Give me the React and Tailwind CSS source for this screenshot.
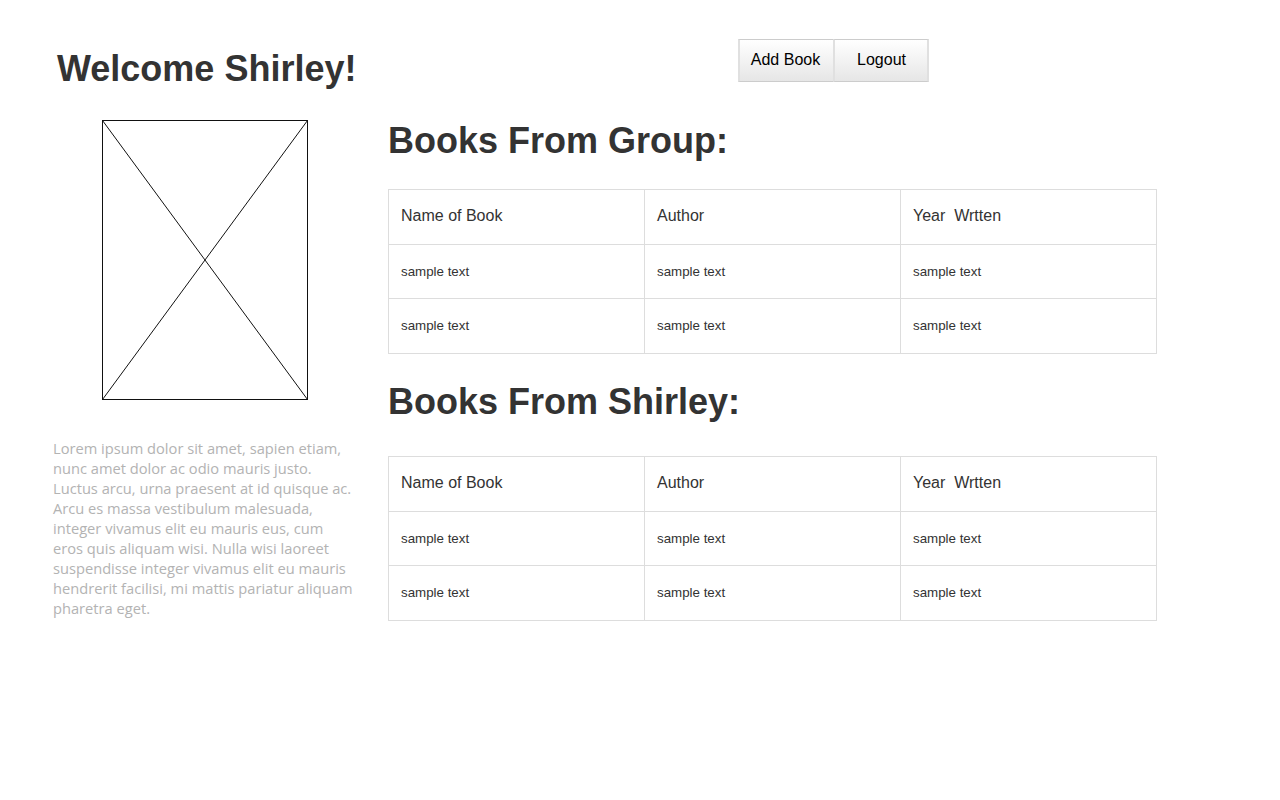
import React from "react";

const HEADERS = ["Name of Book", "Author", "Year  Wrtten"];

const BIO_LINES = [
  "Lorem ipsum dolor sit amet, sapien etiam,",
  "nunc amet dolor ac odio mauris justo.",
  "Luctus arcu, urna praesent at id quisque ac.",
  "Arcu es massa vestibulum malesuada,",
  "integer vivamus elit eu mauris eus, cum",
  "eros quis aliquam wisi. Nulla wisi laoreet",
  "suspendisse integer vivamus elit eu mauris",
  "hendrerit facilisi, mi mattis pariatur aliquam",
  "pharetra eget.",
];

function Heading({ as: Tag = "h2", className = "", children }) {
  return (
    <Tag className={`whitespace-nowrap text-[36px] leading-10 font-bold text-[#333] ${className}`}>
      {children}
    </Tag>
  );
}

function BookTable({ className = "" }) {
  return (
    <div
      className={`grid w-[769px] grid-cols-[256px_256px_256px] grid-rows-[55px_54px_55px] border-t border-l border-[#ddd] text-[#333] ${className}`}
    >
      {HEADERS.map((label) => (
        <div
          key={label}
          className="border-r border-b border-[#ddd] px-3 pt-4 text-base leading-5 whitespace-pre"
        >
          {label}
        </div>
      ))}
      {[0, 1, 2, 3, 4, 5].map((cell) => (
        <div
          key={cell}
          className="border-r border-b border-[#ddd] px-3 pt-[17px] text-[13.33px] leading-5"
        >
          sample text
        </div>
      ))}
    </div>
  );
}

function ImagePlaceholder() {
  return (
    <svg className="mt-[31px] ml-[49px] block" width="206" height="280" viewBox="0 0 206 280" fill="none" stroke="#111">
      <rect x="0.5" y="0.5" width="205" height="279" />
      <path d="M0.5 0.5 205.5 279.5M205.5 0.5 0.5 279.5" />
    </svg>
  );
}

function ToolbarButton({ className = "", children }) {
  return (
    <button
      type="button"
      className={`h-[43px] border-y border-x-[#e0e0e0] border-y-[#ccc] bg-linear-to-b from-white to-[#e6e6e6] pb-0.5 text-base whitespace-nowrap text-black ${className}`}
    >
      {children}
    </button>
  );
}

export default function App() {
  return (
    <div className="flex min-h-screen bg-white font-['Liberation_Sans',Arial,sans-serif]">
      <aside className="ml-[53px] w-[335px] shrink-0 pt-[49px]">
        <Heading as="h1" className="ml-1">Welcome Shirley!</Heading>
        <ImagePlaceholder />
        <p className="mt-[38px] font-['Open_Sans',sans-serif] text-[14.67px] leading-5 text-[#b3b3b3]">
          {BIO_LINES.map((line) => (
            <span key={line} className="block whitespace-nowrap">{line}</span>
          ))}
        </p>
      </aside>
      <main className="w-[769px] pt-[39px]">
        <div className="ml-[350px] flex">
          <ToolbarButton className="w-[95px] border-l-2 pr-0.5">Add Book</ToolbarButton>
          <ToolbarButton className="w-[96px] border-x-2 pl-px">Logout</ToolbarButton>
        </div>
        <Heading className="mt-[39px]">Books From Group:</Heading>
        <BookTable className="mt-[28px]" />
        <Heading className="mt-[28px]">Books From Shirley:</Heading>
        <BookTable className="mt-[34px]" />
      </main>
    </div>
  );
}
